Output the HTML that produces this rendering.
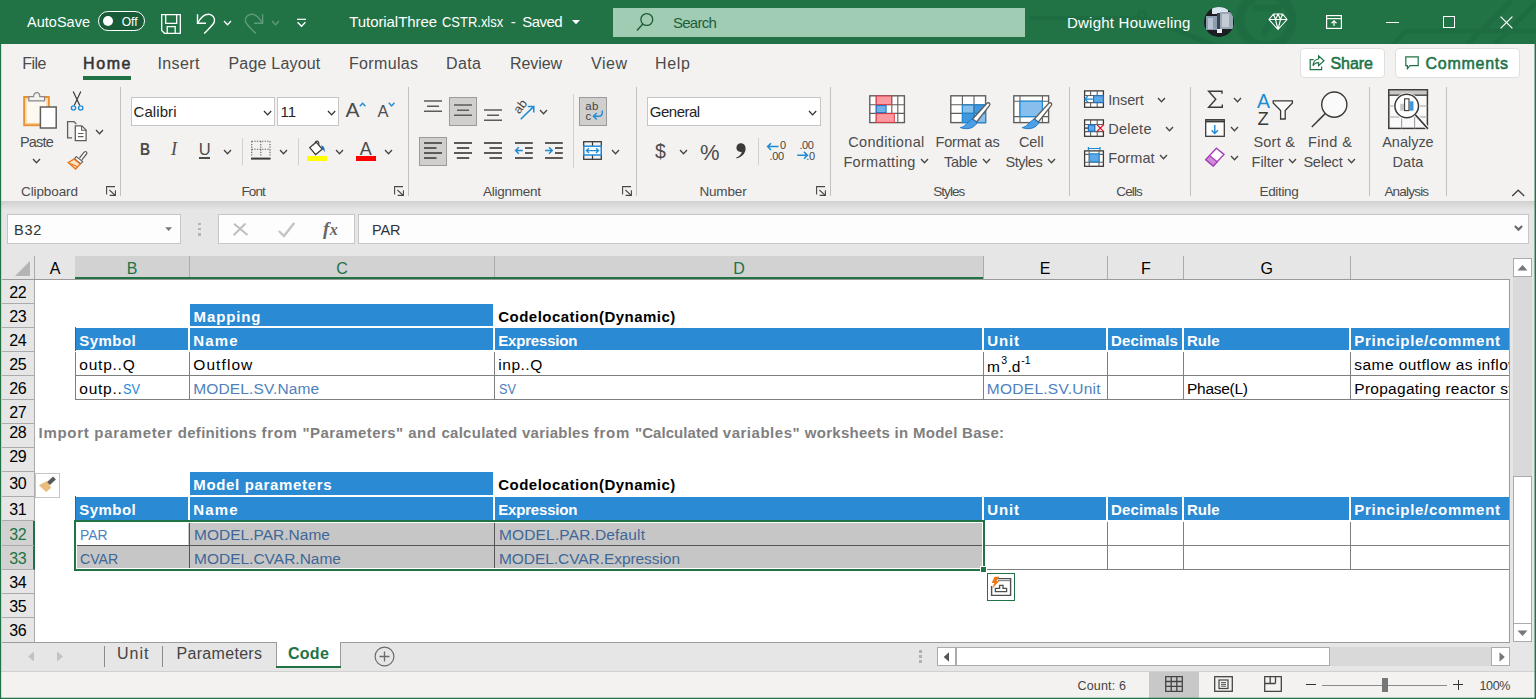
<!DOCTYPE html>
<html><head><meta charset="utf-8"><title>TutorialThree CSTR.xlsx - Excel</title>
<style>
html,body{margin:0;padding:0}
body{width:1536px;height:699px;overflow:hidden;position:relative;background:#e6e6e6;font-family:"Liberation Sans",sans-serif}
.a{position:absolute;box-sizing:border-box}
.t{position:absolute;white-space:pre;line-height:1}
svg{overflow:visible}
</style></head><body>
<div class="a" style="left:0px;top:0px;width:1536px;height:44px;background:#217346;"></div>
<svg class="a" style="left:1030px;top:0px;" width="506" height="44" viewBox="0 0 506 44"><g fill="none" stroke="#1e6c41" stroke-width="4.5"><circle cx="236" cy="20" r="26" stroke-width="9"/><path d="M222 8 H248 L233 36" stroke-width="6.5"/><path d="M0 18 H106"/><circle cx="112" cy="15" r="4" stroke-width="3"/><path d="M118 19 L196 50" stroke-width="5"/><path d="M362 46 L376 31 H506 M438 44 L482 0 M465 44 L506 3"/></g></svg>
<span class="t" style="left:27.00px;top:15px;font-size:14.5px;color:#fff;letter-spacing:0.017px;">AutoSave</span>
<div class="a" style="left:98px;top:11px;width:47px;height:20px;background:#185c37;border:1px solid #fff;border-radius:10px;"></div>
<div class="a" style="left:103px;top:16px;width:10px;height:10px;background:#fff;border-radius:5px;"></div>
<span class="t" style="left:121.70px;top:16px;font-size:12px;color:#fff;letter-spacing:0.057px;">Off</span>
<svg class="a" style="left:161px;top:14px;" width="20" height="20" viewBox="0 0 20 20"><path d="M0.7 0.7 H19.3 V19.3 H3.5 L0.7 16.5 Z M4.7 0.7 V9.3 H15.7 V0.7 M6.2 19.3 V12.7 H14.2 V19.3" fill="none" stroke="#fff" stroke-width="1.3"/></svg>
<svg class="a" style="left:195px;top:12px;" width="24" height="24" viewBox="0 0 24 24"><path d="M2.5 2.3 V11.2 H11" fill="none" stroke="#fff" stroke-width="1.4"/><path d="M3 10.7 C6 5 10 2.3 13.5 2.3 C17.5 2.3 20.5 6 19.3 10 C18.6 12.3 16 14.5 9.2 21.6" fill="none" stroke="#fff" stroke-width="1.4"/></svg>
<svg class="a" style="left:223.0px;top:19.6px;" width="9" height="5.8" viewBox="0 0 9 5.8"><path d="M1 1 L4.5 4.8 L8 1" fill="none" stroke="#fff" stroke-width="1.3"/></svg>
<svg class="a" style="left:243px;top:12px;" width="24" height="24" viewBox="0 0 24 24"><path d="M19.6 2.3 V11.2 H11" fill="none" stroke="#5f9b7b" stroke-width="1.4"/><path d="M19 10.7 C16 5 12 2.3 8.5 2.3 C4.5 2.3 1.5 6 2.7 10 C3.4 12.3 6 14.5 12.8 21.6" fill="none" stroke="#5f9b7b" stroke-width="1.4"/></svg>
<svg class="a" style="left:271.0px;top:19.6px;" width="9" height="5.8" viewBox="0 0 9 5.8"><path d="M1 1 L4.5 4.8 L8 1" fill="none" stroke="#5f9b7b" stroke-width="1.3"/></svg>
<svg class="a" style="left:296px;top:18px;" width="11" height="10" viewBox="0 0 11 10"><path d="M1 1.3 H10" stroke="#fff" stroke-width="1.2" fill="none"/><path d="M1.6 4.2 L5.5 8.2 L9.4 4.2" stroke="#fff" stroke-width="1.3" fill="none"/></svg>
<span class="t" style="left:349.30px;top:14px;font-size:15px;color:#fff;letter-spacing:-0.079px;">TutorialThree</span>
<span class="t" style="left:441.60px;top:14px;font-size:15px;color:#fff;transform:scaleX(0.8640);transform-origin:0 0;">CSTR.xlsx</span>
<span class="t" style="left:510.70px;top:14px;font-size:15px;color:#fff;">-</span>
<span class="t" style="left:522.30px;top:14px;font-size:15px;color:#fff;letter-spacing:-0.533px;">Saved</span>
<svg class="a" style="left:571.5px;top:20px;" width="8" height="5" viewBox="0 0 8 5"><path d="M0 0 L4 4.2 L8 0 Z" fill="#fff"/></svg>
<div class="a" style="left:613px;top:8px;width:412px;height:29px;background:#9fccb3;"></div>
<svg class="a" style="left:636px;top:12px;" width="20" height="20" viewBox="0 0 20 20"><circle cx="10.8" cy="7.5" r="5.9" fill="none" stroke="#1e5c3a" stroke-width="1.3"/><path d="M6.8 12 L1 18.5" stroke="#1e5c3a" stroke-width="1.4"/></svg>
<span class="t" style="left:673.00px;top:15px;font-size:15px;color:#1e5c3a;letter-spacing:-0.745px;">Search</span>
<span class="t" style="left:1067.00px;top:15px;font-size:15px;color:#fff;letter-spacing:0.223px;">Dwight Houweling</span>
<div class="a" style="left:1204px;top:7px;width:30px;height:30px;background:#1b1d20;border-radius:50%;overflow:hidden;"><div class="a" style="left:8px;top:0;width:16px;height:7px;background:#d9e6ef"></div><div class="a" style="left:2px;top:9px;width:11px;height:14px;background:#8c9db1"></div><div class="a" style="left:4px;top:11px;width:5px;height:11px;background:#b7c3d0"></div><div class="a" style="left:16px;top:5px;width:13px;height:17px;background:#9aa7b5"></div><div class="a" style="left:18px;top:7px;width:7px;height:13px;background:#c3ccd5"></div><div class="a" style="left:13px;top:6px;width:3px;height:20px;background:#3a4654"></div><div class="a" style="left:13px;top:22px;width:5px;height:4px;background:#e8edf2"></div></div>
<svg class="a" style="left:1268px;top:13px;" width="20" height="18" viewBox="0 0 20 18"><path d="M5.5 1 H14.5 L19 6.5 L10 16.5 L1 6.5 Z M1 6.5 H19 M5.5 1 L7.5 6.5 L10 16.5 L12.5 6.5 L14.5 1 M7.5 6.5 L10 1 L12.5 6.5" fill="none" stroke="#fff" stroke-width="1.1"/></svg>
<svg class="a" style="left:1326px;top:15px;" width="16" height="14" viewBox="0 0 16 14"><rect x="0.6" y="0.6" width="14.8" height="12.8" fill="none" stroke="#fff" stroke-width="1.2"/><path d="M0.6 3.6 H15.4" stroke="#fff" stroke-width="1.2"/><path d="M8 11 V6 M5.5 8.2 L8 5.8 L10.5 8.2" stroke="#fff" stroke-width="1.2" fill="none"/></svg>
<div class="a" style="left:1385.5px;top:21.5px;width:13.5px;height:1.3px;background:#fff;"></div>
<div class="a" style="left:1443px;top:16px;width:12px;height:12px;border:1.3px solid #fff;"></div>
<svg class="a" style="left:1499.5px;top:15.8px;" width="13" height="13" viewBox="0 0 13 13"><path d="M0.6 0.6 L12.4 12.4 M12.4 0.6 L0.6 12.4" stroke="#fff" stroke-width="1.3"/></svg>
<div class="a" style="left:0px;top:44px;width:1536px;height:157px;background:#f3f2f1;"></div>
<span class="t" style="left:22.20px;top:56px;font-size:16px;color:#4a4a4a;letter-spacing:-0.494px;">File</span>
<span class="t" style="left:83.00px;top:56px;font-size:16px;color:#333;letter-spacing:1.607px;-webkit-text-stroke:0.55px #333;">Home</span>
<div class="a" style="left:83px;top:76px;width:48px;height:3.5px;background:#217346;"></div>
<span class="t" style="left:157.40px;top:56px;font-size:16px;color:#4a4a4a;letter-spacing:0.417px;">Insert</span>
<span class="t" style="left:228.50px;top:56px;font-size:16px;color:#4a4a4a;letter-spacing:0.195px;">Page Layout</span>
<span class="t" style="left:349.00px;top:56px;font-size:16px;color:#4a4a4a;letter-spacing:0.331px;">Formulas</span>
<span class="t" style="left:446.00px;top:56px;font-size:16px;color:#4a4a4a;letter-spacing:0.401px;">Data</span>
<span class="t" style="left:510.00px;top:56px;font-size:16px;color:#4a4a4a;letter-spacing:-0.092px;">Review</span>
<span class="t" style="left:591.00px;top:56px;font-size:16px;color:#4a4a4a;letter-spacing:0.536px;">View</span>
<span class="t" style="left:655.00px;top:56px;font-size:16px;color:#4a4a4a;letter-spacing:0.698px;">Help</span>
<div class="a" style="left:1300px;top:48px;width:85px;height:30px;background:#fff;border:1px solid #e1dfdd;border-radius:4px;"></div>
<div class="a" style="left:1395px;top:48px;width:125px;height:30px;background:#fff;border:1px solid #e1dfdd;border-radius:4px;"></div>
<svg class="a" style="left:1309px;top:55px;" width="16" height="16" viewBox="0 0 16 16"><path d="M9.6 4 V0.9 L15 5.8 L9.6 10.7 V7.6 C6.8 7.6 5.2 8.6 4 10.8 C4.2 6.8 6.2 4.4 9.6 4 Z" fill="none" stroke="#217346" stroke-width="1.2"/><path d="M4.6 4.6 H1.2 V14.6 H12.6 V11.6" fill="none" stroke="#217346" stroke-width="1.2"/></svg>
<span class="t" style="left:1330.50px;top:56px;font-size:16px;color:#217346;letter-spacing:-0.049px;-webkit-text-stroke:0.55px #217346;">Share</span>
<svg class="a" style="left:1405px;top:55.5px;" width="15" height="14" viewBox="0 0 15 14"><path d="M0.8 0.8 H13.2 V9.6 H5 L2.4 12.6 V9.6 H0.8 Z" fill="none" stroke="#217346" stroke-width="1.2"/></svg>
<span class="t" style="left:1425.50px;top:56px;font-size:16px;color:#217346;letter-spacing:0.735px;-webkit-text-stroke:0.55px #217346;">Comments</span>
<div class="a" style="left:120px;top:87px;width:1px;height:109px;background:#c3c1be;"></div>
<div class="a" style="left:408px;top:87px;width:1px;height:109px;background:#c3c1be;"></div>
<div class="a" style="left:636px;top:87px;width:1px;height:109px;background:#c3c1be;"></div>
<div class="a" style="left:830px;top:87px;width:1px;height:109px;background:#c3c1be;"></div>
<div class="a" style="left:1069px;top:87px;width:1px;height:109px;background:#c3c1be;"></div>
<div class="a" style="left:1190px;top:87px;width:1px;height:109px;background:#c3c1be;"></div>
<div class="a" style="left:1369px;top:87px;width:1px;height:109px;background:#c3c1be;"></div>
<div class="a" style="left:1446px;top:87px;width:1px;height:109px;background:#c3c1be;"></div>
<div class="a" style="left:0px;top:201px;width:1536px;height:9px;background:linear-gradient(#cfcfcf,#d6d6d6 25%,#e6e6e6);"></div>
<span class="t" style="left:21.00px;top:185px;font-size:13.5px;color:#4c4c4c;letter-spacing:-0.098px;">Clipboard</span>
<svg class="a" style="left:105.8px;top:186px;" width="10" height="10" viewBox="0 0 10 10"><path d="M0.6 8.6 V0.6 H9 M3.4 4 L9.3 9.3 M9.4 4.3 V9.4 H3.6" fill="none" stroke="#4a4846" stroke-width="1.1"/></svg>
<span class="t" style="left:241.50px;top:185px;font-size:13.5px;color:#4c4c4c;letter-spacing:-0.904px;">Font</span>
<svg class="a" style="left:393.9px;top:186px;" width="10" height="10" viewBox="0 0 10 10"><path d="M0.6 8.6 V0.6 H9 M3.4 4 L9.3 9.3 M9.4 4.3 V9.4 H3.6" fill="none" stroke="#4a4846" stroke-width="1.1"/></svg>
<span class="t" style="left:483.00px;top:185px;font-size:13.5px;color:#4c4c4c;letter-spacing:-0.254px;">Alignment</span>
<svg class="a" style="left:621.9px;top:186px;" width="10" height="10" viewBox="0 0 10 10"><path d="M0.6 8.6 V0.6 H9 M3.4 4 L9.3 9.3 M9.4 4.3 V9.4 H3.6" fill="none" stroke="#4a4846" stroke-width="1.1"/></svg>
<span class="t" style="left:699.40px;top:185px;font-size:13.5px;color:#4c4c4c;letter-spacing:-0.143px;">Number</span>
<svg class="a" style="left:815.9px;top:186px;" width="10" height="10" viewBox="0 0 10 10"><path d="M0.6 8.6 V0.6 H9 M3.4 4 L9.3 9.3 M9.4 4.3 V9.4 H3.6" fill="none" stroke="#4a4846" stroke-width="1.1"/></svg>
<span class="t" style="left:933.20px;top:185px;font-size:13.5px;color:#4c4c4c;letter-spacing:-0.933px;">Styles</span>
<span class="t" style="left:1116.30px;top:185px;font-size:13.5px;color:#4c4c4c;letter-spacing:-0.877px;">Cells</span>
<span class="t" style="left:1259.50px;top:185px;font-size:13.5px;color:#4c4c4c;letter-spacing:-0.346px;">Editing</span>
<span class="t" style="left:1384.40px;top:185px;font-size:13.5px;color:#4c4c4c;letter-spacing:-0.796px;">Analysis</span>
<svg class="a" style="left:1511px;top:189px;" width="15" height="8" viewBox="0 0 15 8"><path d="M1.2 7 L7.2 1.2 L13.2 7" fill="none" stroke="#444" stroke-width="1.4"/></svg>
<svg class="a" style="left:22px;top:91px;" width="36" height="40" viewBox="0 0 36 40"><rect x="2.2" y="6" width="24.6" height="28.2" fill="#fdf8f0" stroke="#e8912d" stroke-width="2"/><rect x="4" y="7.8" width="21" height="24.6" fill="none" stroke="#f7c98e" stroke-width="1"/><path d="M6.8 9.8 V5.6 H11.6 C11.6 0.2 17.8 0.2 17.8 5.6 H22.6 V9.8 Z" fill="#f3f2f1" stroke="#8a8886" stroke-width="1.2"/><rect x="18.4" y="16" width="15.8" height="21" fill="#fff" stroke="#605e5c" stroke-width="1.5"/></svg>
<span class="t" style="left:20.00px;top:135px;font-size:14.5px;color:#4c4c4c;letter-spacing:-0.820px;">Paste</span>
<svg class="a" style="left:32.0px;top:157.5px;" width="9" height="5.8" viewBox="0 0 9 5.8"><path d="M1 1 L4.5 4.8 L8 1" fill="none" stroke="#444" stroke-width="1.3"/></svg>
<svg class="a" style="left:68px;top:90px;" width="18" height="23" viewBox="0 0 18 23"><path d="M5.2 1.5 L11.8 15.5 M12.8 1.5 L6.2 15.5" stroke="#3b3a39" stroke-width="1.2" fill="none"/><circle cx="5.5" cy="18" r="2.1" fill="none" stroke="#1e8bd5" stroke-width="1.4"/><circle cx="12.7" cy="18" r="2.1" fill="none" stroke="#1e8bd5" stroke-width="1.4"/></svg>
<svg class="a" style="left:66px;top:120px;" width="22" height="22" viewBox="0 0 22 22"><path d="M6 17.8 H1.6 V1.6 H8 L10.3 4" fill="none" stroke="#605e5c" stroke-width="1.3"/><path d="M9.3 5.8 H15.8 L20.1 10 V20.6 H9.3 Z" fill="#fff" stroke="#605e5c" stroke-width="1.3"/><path d="M15.6 6 V10.2 H20 M12 13.5 H17.5 M12 16.6 H17.5" fill="none" stroke="#605e5c" stroke-width="1.1"/></svg>
<svg class="a" style="left:94.9px;top:128.7px;" width="9" height="5.8" viewBox="0 0 9 5.8"><path d="M1 1 L4.5 4.8 L8 1" fill="none" stroke="#444" stroke-width="1.3"/></svg>
<svg class="a" style="left:67px;top:150px;" width="22" height="22" viewBox="0 0 22 22"><path d="M12.5 8 L17.2 2.2 C18.6 0.6 20.8 2.4 19.5 4 L14.8 9.8" fill="#fff" stroke="#605e5c" stroke-width="1.2"/><path d="M9.3 6.6 L15.6 11.6 L13.6 13.8 L7.4 8.8 Z" fill="#fff" stroke="#605e5c" stroke-width="1.2"/><path d="M7 9 L1.2 12.6 L8.6 19 L13.2 14 Z" fill="#fbe3c6" stroke="#e8761c" stroke-width="1.3"/><path d="M3.5 13.5 L10.3 16.8" stroke="#e8761c" stroke-width="1.2"/></svg>
<div class="a" style="left:131px;top:97px;width:144px;height:29px;background:#fff;border:1px solid #c8c6c4;"></div>
<div class="a" style="left:277px;top:97px;width:62px;height:29px;background:#fff;border:1px solid #c8c6c4;"></div>
<span class="t" style="left:133.50px;top:104px;font-size:15px;color:#252423;letter-spacing:0.082px;">Calibri</span>
<svg class="a" style="left:262.79999999999995px;top:109.64999999999999px;" width="9.2" height="5.9" viewBox="0 0 9.2 5.9"><path d="M1 1 L4.6 4.9 L8.2 1" fill="none" stroke="#333" stroke-width="1.3"/></svg>
<span class="t" style="left:280.50px;top:104px;font-size:15px;color:#252423;">11</span>
<svg class="a" style="left:326.79999999999995px;top:109.64999999999999px;" width="9.2" height="5.9" viewBox="0 0 9.2 5.9"><path d="M1 1 L4.6 4.9 L8.2 1" fill="none" stroke="#333" stroke-width="1.3"/></svg>
<span class="t" style="left:345.50px;top:99px;font-size:21px;color:#4c4c4c;">A</span>
<svg class="a" style="left:358.7px;top:101.5px;" width="8" height="5" viewBox="0 0 8 5"><path d="M0.8 4.3 L3.6 1.2 L6.4 4.3" fill="none" stroke="#1e8bd5" stroke-width="1.4"/></svg>
<span class="t" style="left:377.50px;top:103px;font-size:16.5px;color:#4c4c4c;">A</span>
<svg class="a" style="left:388.3px;top:101.7px;" width="8" height="5" viewBox="0 0 8 5"><path d="M0.8 0.8 L3.6 3.9 L6.4 0.8" fill="none" stroke="#1e8bd5" stroke-width="1.4"/></svg>
<span class="t" style="left:140.00px;top:141px;font-size:16.5px;color:#4c4c4c;font-weight:700;transform:scaleX(0.85);transform-origin:0 0;">B</span>
<span class="t" style="left:171.00px;top:140px;font-size:18px;color:#4c4c4c;font-style:italic;font-family:'Liberation Serif',serif;">I</span>
<span class="t" style="left:198.70px;top:141px;font-size:16.5px;color:#4c4c4c;">U</span>
<div class="a" style="left:198.8px;top:157.3px;width:11.2px;height:1.5px;background:#4c4c4c;"></div>
<svg class="a" style="left:223.0px;top:148.7px;" width="9" height="5.8" viewBox="0 0 9 5.8"><path d="M1 1 L4.5 4.8 L8 1" fill="none" stroke="#444" stroke-width="1.3"/></svg>
<div class="a" style="left:242px;top:138px;width:1px;height:27px;background:#d2d0ce;"></div>
<svg class="a" style="left:251px;top:140px;" width="20" height="20" viewBox="0 0 20 20"><path d="M0.7 1.3 H19 M0.7 1.3 V17 M19 1.3 V17 M9.8 1.3 V17 M0.7 9.3 H19" stroke="#605e5c" stroke-width="1.1" stroke-dasharray="1.3 1.3" fill="none"/><path d="M0 18.6 H19.6" stroke="#3b3a39" stroke-width="2"/></svg>
<svg class="a" style="left:279.0px;top:148.7px;" width="9" height="5.8" viewBox="0 0 9 5.8"><path d="M1 1 L4.5 4.8 L8 1" fill="none" stroke="#444" stroke-width="1.3"/></svg>
<div class="a" style="left:298px;top:138px;width:1px;height:27px;background:#d2d0ce;"></div>
<svg class="a" style="left:307px;top:140px;" width="21" height="22" viewBox="0 0 21 22"><path d="M8.2 3.5 C8.2 0.2 11.8 0.2 11.8 3.5 V6" fill="none" stroke="#3b3a39" stroke-width="1.1"/><path d="M9.2 2.2 L15.2 9.2 L8.6 14.6 L2.8 7.6 Z" fill="#fff" stroke="#3b3a39" stroke-width="1.3"/><path d="M14.3 5.2 C17.3 6.2 18.2 9 17.6 12.6 C16.6 10 15.8 9.2 14.6 8.6 Z" fill="#1e6fc0"/><rect x="0" y="16" width="20" height="5" fill="#ffff00"/></svg>
<svg class="a" style="left:335.0px;top:148.7px;" width="9" height="5.8" viewBox="0 0 9 5.8"><path d="M1 1 L4.5 4.8 L8 1" fill="none" stroke="#444" stroke-width="1.3"/></svg>
<span class="t" style="left:359.80px;top:140px;font-size:18px;color:#4c4c4c;">A</span>
<div class="a" style="left:356px;top:156px;width:20px;height:5px;background:#ff0000;"></div>
<svg class="a" style="left:384.0px;top:148.7px;" width="9" height="5.8" viewBox="0 0 9 5.8"><path d="M1 1 L4.5 4.8 L8 1" fill="none" stroke="#444" stroke-width="1.3"/></svg>
<div class="a" style="left:449px;top:97px;width:28px;height:29px;background:#d0cfce;border:1px solid #9d9b99;"></div>
<div class="a" style="left:579px;top:97px;width:28px;height:29px;background:#d0cfce;border:1px solid #9d9b99;"></div>
<div class="a" style="left:419px;top:137px;width:28px;height:29px;background:#d0cfce;border:1px solid #9d9b99;"></div>
<svg class="a" style="left:423.9px;top:99.3px;" width="18" height="16" viewBox="0 0 18 16"><path d="M0 2 H18 M3 7.2 H15 M0 12.3 H18" stroke="#5d5b58" stroke-width="1.4"/></svg>
<svg class="a" style="left:454.1px;top:103.1px;" width="18" height="16" viewBox="0 0 18 16"><path d="M0 2 H18 M3 7.2 H15 M0 12.3 H18" stroke="#5d5b58" stroke-width="1.4"/></svg>
<svg class="a" style="left:484px;top:108.1px;" width="18" height="16" viewBox="0 0 18 16"><path d="M0 2 H18 M3 7.2 H15 M0 12.3 H18" stroke="#5d5b58" stroke-width="1.4"/></svg>
<svg class="a" style="left:511px;top:97px;" width="26" height="26" viewBox="0 0 26 26"><text x="0" y="0" font-size="12.5" font-family="Liberation Sans" fill="#444" transform="translate(8.3 17.6) rotate(-52)">ab</text><path d="M9.7 22.3 L22.6 9.6 M16.8 9.4 H22.8 V15.4" fill="none" stroke="#1e8bd5" stroke-width="1.5"/></svg>
<svg class="a" style="left:538.8px;top:108.69999999999999px;" width="9" height="5.8" viewBox="0 0 9 5.8"><path d="M1 1 L4.5 4.8 L8 1" fill="none" stroke="#444" stroke-width="1.3"/></svg>
<svg class="a" style="left:584px;top:100px;" width="22" height="22" viewBox="0 0 22 22"><text x="1.2" y="9.8" font-size="11.5" font-family="Liberation Sans" fill="#444" letter-spacing="0.3">ab</text><text x="1.4" y="19.5" font-size="11.5" font-family="Liberation Sans" fill="#444">c</text><path d="M18.3 10.5 V12.5 C18.3 15.3 16.8 16.3 14.3 16.3 H9.6 M12.8 13 L9.4 16.3 L12.8 19.6" fill="none" stroke="#1e8bd5" stroke-width="1.4"/></svg>
<svg class="a" style="left:423.9px;top:141px;" width="18" height="20" viewBox="0 0 18 20"><path d="M0.0 2.0 H18.0 M0.0 7.0 H12.5 M0.0 12.0 H18.0 M0.0 17.0 H12.5 " stroke="#5d5b58" stroke-width="1.8"/></svg>
<svg class="a" style="left:454.1px;top:141px;" width="18" height="20" viewBox="0 0 18 20"><path d="M0.0 2.0 H18.0 M2.8 7.0 H15.2 M0.0 12.0 H18.0 M2.8 17.0 H15.2 " stroke="#5d5b58" stroke-width="1.8"/></svg>
<svg class="a" style="left:484px;top:141px;" width="18" height="20" viewBox="0 0 18 20"><path d="M0.0 2.0 H18.0 M5.5 7.0 H18.0 M0.0 12.0 H18.0 M5.5 17.0 H18.0 " stroke="#5d5b58" stroke-width="1.8"/></svg>
<svg class="a" style="left:515.2px;top:141px;" width="18" height="20" viewBox="0 0 18 20"><path d="M0 2 H17.8 M10 7 H17.8 M10 12 H17.8 M0 17 H17.8" stroke="#5d5b58" stroke-width="1.8"/><path d="M7.8 9.5 H0.8 M3.8 6.3 L0.6 9.5 L3.8 12.7" fill="none" stroke="#1e8bd5" stroke-width="1.5"/></svg>
<svg class="a" style="left:545.1px;top:141px;" width="18" height="20" viewBox="0 0 18 20"><path d="M0 2 H17.8 M10 7 H17.8 M10 12 H17.8 M0 17 H17.8" stroke="#5d5b58" stroke-width="1.8"/><path d="M0 9.5 H7 M4 6.3 L7.2 9.5 L4 12.7" fill="none" stroke="#1e8bd5" stroke-width="1.5"/></svg>
<div class="a" style="left:573px;top:94px;width:1px;height:74px;background:#d2d0ce;"></div>
<svg class="a" style="left:583px;top:141px;" width="19" height="19" viewBox="0 0 19 19"><rect x="0.7" y="0.7" width="17.6" height="17.6" fill="#f3f2f1" stroke="#3b3a39" stroke-width="1.3"/><path d="M9.5 0.7 V5 M9.5 14 V18.3" stroke="#3b3a39" stroke-width="1.2" fill="none"/><rect x="0.8" y="5.2" width="17.4" height="8.8" fill="#fff" stroke="#1e8bd5" stroke-width="1.5"/><path d="M3.6 9.6 H15.4 M6 7.2 L3.4 9.6 L6 12 M13 7.2 L15.6 9.6 L13 12" fill="none" stroke="#1e8bd5" stroke-width="1.3"/></svg>
<svg class="a" style="left:610.8px;top:148.5px;" width="9" height="5.8" viewBox="0 0 9 5.8"><path d="M1 1 L4.5 4.8 L8 1" fill="none" stroke="#444" stroke-width="1.3"/></svg>
<div class="a" style="left:647px;top:97px;width:174px;height:29px;background:#fff;border:1px solid #c8c6c4;"></div>
<span class="t" style="left:649.80px;top:104px;font-size:15px;color:#252423;letter-spacing:-0.494px;">General</span>
<svg class="a" style="left:808.4px;top:109.64999999999999px;" width="9.2" height="5.9" viewBox="0 0 9.2 5.9"><path d="M1 1 L4.6 4.9 L8.2 1" fill="none" stroke="#333" stroke-width="1.3"/></svg>
<span class="t" style="left:655.00px;top:142px;font-size:19.5px;color:#4c4c4c;">$</span>
<svg class="a" style="left:678.8px;top:148.7px;" width="9" height="5.8" viewBox="0 0 9 5.8"><path d="M1 1 L4.5 4.8 L8 1" fill="none" stroke="#444" stroke-width="1.3"/></svg>
<span class="t" style="left:700.00px;top:142px;font-size:22px;color:#4c4c4c;">%</span>
<svg class="a" style="left:735px;top:142px;" width="12" height="18" viewBox="0 0 12 18"><path d="M5.8 1.2 C8.8 1.2 10.6 3.4 10.6 6.6 C10.6 11.2 7.2 15 1.6 16.6 L1.2 15.6 C4.6 14.2 6.4 12.2 6.8 9.8 C3.8 10.6 1.4 8.6 1.4 5.8 C1.4 3.2 3.4 1.2 5.8 1.2 Z" fill="#3b3a39"/></svg>
<div class="a" style="left:758px;top:138px;width:1px;height:27px;background:#d2d0ce;"></div>
<svg class="a" style="left:767px;top:140px;" width="21" height="21" viewBox="0 0 21 21"><path d="M11.5 6.6 H0.6 M4 3.2 L0.6 6.6 L4 10" fill="none" stroke="#1e8bd5" stroke-width="1.5"/><text x="13" y="9.2" font-size="11" font-family="Liberation Sans" fill="#444">0</text><text x="2.6" y="19.5" font-size="11" font-family="Liberation Sans" fill="#444" letter-spacing="-0.4">.00</text></svg>
<svg class="a" style="left:796px;top:140px;" width="21" height="21" viewBox="0 0 21 21"><text x="3.4" y="9.2" font-size="11" font-family="Liberation Sans" fill="#444" letter-spacing="-0.4">.00</text><path d="M1.2 15.3 H11.3 M8 11.9 L11.4 15.3 L8 18.7" fill="none" stroke="#1e8bd5" stroke-width="1.5"/><text x="10.3" y="19.5" font-size="11" font-family="Liberation Sans" fill="#444" letter-spacing="-0.4">.0</text></svg>
<svg class="a" style="left:869px;top:95px;" width="36" height="29" viewBox="0 0 36 29"><rect x="0.8" y="0.8" width="34.6" height="26.8" fill="#fff" stroke="#605e5c" stroke-width="1.4"/><path d="M7.2 0.8 V27.6 M22.8 0.8 V27.6 M28.8 0.8 V27.6 M0.8 9.7 H35.4 M0.8 18.4 H35.4" stroke="#605e5c" stroke-width="1.1" fill="none"/><rect x="7.3" y="1" width="15.3" height="8.6" fill="#fb9aa0" stroke="#e03a45" stroke-width="1"/><rect x="7.3" y="18.6" width="18" height="8.8" fill="#fb9aa0" stroke="#e03a45" stroke-width="1"/><rect x="7.3" y="10.6" width="9.8" height="7" fill="#6fb1e8" stroke="#1e6fc0" stroke-width="1"/></svg>
<span class="t" style="left:848.20px;top:135px;font-size:14.5px;color:#4c4c4c;letter-spacing:0.355px;">Conditional</span>
<span class="t" style="left:843.40px;top:155px;font-size:14.5px;color:#4c4c4c;letter-spacing:0.300px;">Formatting</span>
<svg class="a" style="left:920.0px;top:157.5px;" width="9" height="5.8" viewBox="0 0 9 5.8"><path d="M1 1 L4.5 4.8 L8 1" fill="none" stroke="#444" stroke-width="1.3"/></svg>
<svg class="a" style="left:950px;top:95px;" width="42" height="36" viewBox="0 0 42 36"><rect x="0.8" y="0.8" width="34.8" height="26.8" fill="#fff" stroke="#605e5c" stroke-width="1.4"/><rect x="12.4" y="9.7" width="23.2" height="17.9" fill="#3f97e0"/><rect x="13" y="10.3" width="10.6" height="8" fill="#86bfee"/><rect x="24.6" y="19" width="10.6" height="8.2" fill="#86bfee"/><path d="M12.4 0.8 V27.6 M24 0.8 V27.6 M0.8 9.7 H35.6 M0.8 18.4 H35.6" stroke="#605e5c" stroke-width="1.1" fill="none"/><path d="M12.4 9.7 V27.6 M24 9.7 V27.6 M12.4 9.7 H35.6 M12.4 18.4 H35.6 M35.6 9.7 V27.6 M12.4 27.6 H35.6" stroke="#1e8bd5" stroke-width="1.1" fill="none"/><path d="M37 8.2 C39 7 40.8 8.8 39.4 10.6 L26.6 27 L22.6 24 Z" fill="#fff" stroke="#605e5c" stroke-width="1.3"/><path d="M22.2 24 L26.9 27.6 C25 33 17 35.2 10.3 32.6 C15 32 17.3 27.2 22.2 24 Z" fill="#4a9fe6" stroke="#1e6fc0" stroke-width="0.9"/></svg>
<span class="t" style="left:935.40px;top:135px;font-size:14.5px;color:#4c4c4c;letter-spacing:-0.108px;">Format as</span>
<span class="t" style="left:944.00px;top:155px;font-size:14.5px;color:#4c4c4c;letter-spacing:-0.291px;">Table</span>
<svg class="a" style="left:981.9px;top:157.5px;" width="9" height="5.8" viewBox="0 0 9 5.8"><path d="M1 1 L4.5 4.8 L8 1" fill="none" stroke="#444" stroke-width="1.3"/></svg>
<svg class="a" style="left:1013px;top:95px;" width="42" height="36" viewBox="0 0 42 36"><rect x="0.8" y="0.8" width="34.8" height="26.8" fill="#fff" stroke="#605e5c" stroke-width="1.4"/><path d="M7 0.8 V27.6 M29.4 0.8 V27.6 M0.8 6.2 H35.6 M0.8 21.6 H35.6" stroke="#605e5c" stroke-width="1.1" fill="none"/><rect x="7" y="6.2" width="22.4" height="15.4" fill="#86bfee" stroke="#1e8bd5" stroke-width="1.2"/><g transform="translate(-1.2 0)"><path d="M37 8.2 C39 7 40.8 8.8 39.4 10.6 L26.6 27 L22.6 24 Z" fill="#fff" stroke="#605e5c" stroke-width="1.3"/><path d="M22.2 24 L26.9 27.6 C25 33 17 35.2 10.3 32.6 C15 32 17.3 27.2 22.2 24 Z" fill="#4a9fe6" stroke="#1e6fc0" stroke-width="0.9"/></g></svg>
<span class="t" style="left:1019.00px;top:135px;font-size:14.5px;color:#4c4c4c;letter-spacing:-0.126px;">Cell</span>
<span class="t" style="left:1005.60px;top:155px;font-size:14.5px;color:#4c4c4c;letter-spacing:-0.477px;">Styles</span>
<svg class="a" style="left:1047.2px;top:157.5px;" width="9" height="5.8" viewBox="0 0 9 5.8"><path d="M1 1 L4.5 4.8 L8 1" fill="none" stroke="#444" stroke-width="1.3"/></svg>
<svg class="a" style="left:1084px;top:90px;" width="20" height="18" viewBox="0 0 20 18"><rect x="0.6" y="0.9" width="18.8" height="16.4" fill="#fff" stroke="#3b3a39" stroke-width="1.3"/><path d="M0.6 5.5 H19.4 M0.6 12.6 H19.4 M6.6 0.9 V17.3 M13.2 0.9 V17.3" fill="none" stroke="#605e5c" stroke-width="1.1"/><rect x="1.3" y="6.1" width="8" height="5.9" fill="#fff"/><rect x="9.6" y="5.7" width="9.8" height="6.8" fill="#5fa8e6" stroke="#1e6fc0" stroke-width="1.1"/><path d="M10 9.1 H1 M4 6 L0.9 9.1 L4 12.2" fill="none" stroke="#1e8bd5" stroke-width="1.4"/></svg>
<span class="t" style="left:1108.20px;top:93px;font-size:14.5px;color:#4c4c4c;letter-spacing:-0.133px;">Insert</span>
<svg class="a" style="left:1156.8px;top:96.6px;" width="9" height="5.8" viewBox="0 0 9 5.8"><path d="M1 1 L4.5 4.8 L8 1" fill="none" stroke="#444" stroke-width="1.3"/></svg>
<svg class="a" style="left:1084px;top:119px;" width="20" height="18" viewBox="0 0 20 18"><rect x="0.6" y="0.9" width="18.8" height="16.4" fill="#fff" stroke="#3b3a39" stroke-width="1.3"/><path d="M0.6 5.5 H19.4 M0.6 12.6 H19.4 M6.6 0.9 V17.3 M13.2 0.9 V17.3" fill="none" stroke="#605e5c" stroke-width="1.1"/><rect x="1.4" y="6.2" width="19" height="5.7" fill="#f3f2f1"/><path d="M0 9.1 H4.4" stroke="#3b3a39" stroke-width="1.3"/><rect x="4.4" y="6" width="6.4" height="6.2" fill="#5fa8e6" stroke="#1e6fc0" stroke-width="1.2"/><path d="M13.2 5.9 L19.4 12.4 M19.4 5.9 L13.2 12.4" fill="none" stroke="#e81123" stroke-width="1.3"/></svg>
<span class="t" style="left:1108.20px;top:122px;font-size:14.5px;color:#4c4c4c;letter-spacing:0.277px;">Delete</span>
<svg class="a" style="left:1164.7px;top:125.69999999999999px;" width="9" height="5.8" viewBox="0 0 9 5.8"><path d="M1 1 L4.5 4.8 L8 1" fill="none" stroke="#444" stroke-width="1.3"/></svg>
<svg class="a" style="left:1084px;top:147px;" width="20" height="20" viewBox="0 0 20 20"><rect x="0.6" y="3.9" width="18.8" height="15.4" fill="#fff" stroke="#3b3a39" stroke-width="1.3"/><path d="M0.6 7.4 H19.4 M0.6 15.2 H19.4 M5.2 3.9 V19.3 M15 3.9 V19.3" fill="none" stroke="#605e5c" stroke-width="1.1"/><rect x="5.4" y="6.9" width="9.6" height="7.8" fill="#5fa8e6" stroke="#1e8bd5" stroke-width="1.2"/><path d="M4.2 1.5 H16.2 M4.4 0 V3 M16 0 V3" stroke="#1e8bd5" stroke-width="1.2" fill="none"/></svg>
<span class="t" style="left:1108.20px;top:151px;font-size:14.5px;color:#4c4c4c;letter-spacing:0.096px;">Format</span>
<svg class="a" style="left:1159.1px;top:154.29999999999998px;" width="9" height="5.8" viewBox="0 0 9 5.8"><path d="M1 1 L4.5 4.8 L8 1" fill="none" stroke="#444" stroke-width="1.3"/></svg>
<svg class="a" style="left:1207px;top:90px;" width="17" height="19" viewBox="0 0 17 19"><path d="M15 3.8 V1.2 H1.6 L8.8 9.2 L1.6 17.2 H15.3 V14.6" fill="none" stroke="#3b3a39" stroke-width="1.4"/></svg>
<svg class="a" style="left:1232.5px;top:96.6px;" width="9" height="5.8" viewBox="0 0 9 5.8"><path d="M1 1 L4.5 4.8 L8 1" fill="none" stroke="#444" stroke-width="1.3"/></svg>
<svg class="a" style="left:1205px;top:119px;" width="20" height="18" viewBox="0 0 20 18"><rect x="0.7" y="0.7" width="18.6" height="16.6" fill="#fff" stroke="#3b3a39" stroke-width="1.3"/><path d="M0.7 2.4 H19.3" stroke="#3b3a39" stroke-width="2"/><path d="M9.8 6 V14.4 M6.6 11.2 L9.8 14.6 L13 11.2" fill="none" stroke="#1e8bd5" stroke-width="1.4"/></svg>
<svg class="a" style="left:1229.8px;top:125.69999999999999px;" width="9" height="5.8" viewBox="0 0 9 5.8"><path d="M1 1 L4.5 4.8 L8 1" fill="none" stroke="#444" stroke-width="1.3"/></svg>
<svg class="a" style="left:1204px;top:147px;" width="22" height="20" viewBox="0 0 22 20"><path d="M12.4 1.2 L20 7.4 L9.2 19 L1.8 12.6 Z" fill="#fff" stroke="#a33cb8" stroke-width="1.4"/><path d="M5.8 8.6 L13.2 14.8 L9.2 19 L1.8 12.6 Z" fill="#cf8ad8" stroke="#a33cb8" stroke-width="1.2"/></svg>
<svg class="a" style="left:1229.8px;top:154.6px;" width="9" height="5.8" viewBox="0 0 9 5.8"><path d="M1 1 L4.5 4.8 L8 1" fill="none" stroke="#444" stroke-width="1.3"/></svg>
<span class="t" style="left:1257.00px;top:92px;font-size:19.5px;color:#1e8bd5;">A</span>
<span class="t" style="left:1257.60px;top:110px;font-size:18.5px;color:#3b3a39;">Z</span>
<svg class="a" style="left:1272px;top:100px;" width="22" height="21" viewBox="0 0 22 21"><path d="M1.2 0.9 H20.4 V3 L13.2 10.6 V19 H8.6 V10.6 L1.2 3 Z" fill="#fafafa" stroke="#3b3a39" stroke-width="1.3"/></svg>
<span class="t" style="left:1253.40px;top:135px;font-size:14.5px;color:#4c4c4c;letter-spacing:0.241px;">Sort &</span>
<span class="t" style="left:1251.60px;top:155px;font-size:14.5px;color:#4c4c4c;letter-spacing:-0.024px;">Filter</span>
<svg class="a" style="left:1287.8px;top:157.5px;" width="9" height="5.8" viewBox="0 0 9 5.8"><path d="M1 1 L4.5 4.8 L8 1" fill="none" stroke="#444" stroke-width="1.3"/></svg>
<svg class="a" style="left:1310px;top:90px;" width="40" height="40" viewBox="0 0 40 40"><circle cx="24.3" cy="14.6" r="12.6" fill="#fafafa" stroke="#3b3a39" stroke-width="1.4"/><path d="M15.2 23.6 L1.8 37" stroke="#3b3a39" stroke-width="1.5"/></svg>
<span class="t" style="left:1308.00px;top:135px;font-size:14.5px;color:#4c4c4c;letter-spacing:0.379px;">Find &</span>
<span class="t" style="left:1303.40px;top:155px;font-size:14.5px;color:#4c4c4c;letter-spacing:-0.200px;">Select</span>
<svg class="a" style="left:1346.8px;top:157.5px;" width="9" height="5.8" viewBox="0 0 9 5.8"><path d="M1 1 L4.5 4.8 L8 1" fill="none" stroke="#444" stroke-width="1.3"/></svg>
<svg class="a" style="left:1388px;top:89px;" width="41" height="41" viewBox="0 0 41 41"><rect x="0.8" y="0.8" width="38.6" height="38.6" fill="#fafafa" stroke="#3b3a39" stroke-width="1.5"/><rect x="0.8" y="0.8" width="38.6" height="5.4" fill="#c8c6c4" stroke="#3b3a39" stroke-width="1.3"/><path d="M0.8 17 H39.4 M0.8 28 H39.4 M13.6 6.2 V39.4 M26.6 6.2 V39.4" stroke="#a19f9d" stroke-width="1.1"/><circle cx="18.7" cy="17" r="13.3" fill="#fff"/><circle cx="18.7" cy="17" r="11.8" fill="#fff" stroke="#3b3a39" stroke-width="1.5"/><rect x="12.2" y="14.7" width="4.3" height="7" fill="#c8c6c4"/><rect x="16.6" y="9.8" width="4.4" height="11.8" fill="#fff" stroke="#3b3a39" stroke-width="1.1"/><rect x="21.3" y="12.3" width="4.2" height="9.4" fill="#3f97e0"/><path d="M27.4 25.8 L39.6 39.2" stroke="#fff" stroke-width="3.6"/><path d="M27.2 25.6 L39.8 39.6" stroke="#3b3a39" stroke-width="1.6"/></svg>
<span class="t" style="left:1382.20px;top:135px;font-size:14.5px;color:#4c4c4c;letter-spacing:-0.014px;">Analyze</span>
<span class="t" style="left:1392.60px;top:155px;font-size:14.5px;color:#4c4c4c;letter-spacing:0.057px;">Data</span>
<div class="a" style="left:7px;top:214px;width:174px;height:30px;background:#fdfdfd;border:1px solid #c6c6c6;"></div>
<span class="t" style="left:14.00px;top:223px;font-size:14.5px;color:#333;letter-spacing:0.800px;">B32</span>
<svg class="a" style="left:165px;top:227px;" width="8" height="5" viewBox="0 0 8 5"><path d="M0.2 0.3 L3.6 4 L7 0.3 Z" fill="#777"/></svg>
<div class="a" style="left:198px;top:222.5px;width:3px;height:2.8px;background:#b4b4b4;"></div>
<div class="a" style="left:198px;top:227.7px;width:3px;height:2.8px;background:#b4b4b4;"></div>
<div class="a" style="left:198px;top:232.8px;width:3px;height:2.8px;background:#b4b4b4;"></div>
<div class="a" style="left:218px;top:214px;width:137px;height:30px;background:#fdfdfd;border:1px solid #c6c6c6;"></div>
<svg class="a" style="left:232px;top:222px;" width="18" height="15" viewBox="0 0 18 15"><path d="M2 1.8 L15.5 13 M13.5 1.5 L1.6 13.2" stroke="#bdbdbd" stroke-width="1.9" fill="none"/></svg>
<svg class="a" style="left:277px;top:221px;" width="20" height="17" viewBox="0 0 20 17"><path d="M1.8 10 L7 15 L17.2 2" fill="none" stroke="#c4c4c4" stroke-width="2.4"/></svg>
<span class="t" style="left:323.00px;top:219px;font-size:19px;color:#666;font-weight:700;font-style:italic;font-family:'Liberation Serif',serif;">f</span>
<span class="t" style="left:329.70px;top:222px;font-size:16px;color:#666;font-weight:700;font-style:italic;font-family:'Liberation Serif',serif;">x</span>
<div class="a" style="left:358px;top:214px;width:1171px;height:30px;background:#fdfdfd;border:1px solid #c6c6c6;"></div>
<span class="t" style="left:372.00px;top:223px;font-size:14.5px;color:#333;letter-spacing:-0.169px;">PAR</span>
<svg class="a" style="left:1514px;top:225.3px;" width="9" height="6" viewBox="0 0 9 6"><path d="M0.9 1 L4.5 4.6 L8.1 1" fill="none" stroke="#6a6a6a" stroke-width="2.2"/></svg>
<div class="a" style="left:35px;top:280px;width:1474px;height:362px;background:#fff;"></div>
<div class="a" style="left:2px;top:279px;width:1508px;height:1px;background:#9b9b9b;"></div>
<div class="a" style="left:1509px;top:279px;width:1px;height:364px;background:#9b9b9b;"></div>
<div class="a" style="left:2px;top:642px;width:1508px;height:1px;background:#9b9b9b;"></div>
<div class="a" style="left:75px;top:256px;width:908px;height:22px;background:#d2d2d2;"></div>
<div class="a" style="left:34px;top:256px;width:1px;height:23px;background:#ababab;"></div>
<div class="a" style="left:189px;top:256px;width:1px;height:23px;background:#ababab;"></div>
<div class="a" style="left:494px;top:256px;width:1px;height:23px;background:#ababab;"></div>
<div class="a" style="left:983px;top:256px;width:1px;height:23px;background:#ababab;"></div>
<div class="a" style="left:1107px;top:256px;width:1px;height:23px;background:#ababab;"></div>
<div class="a" style="left:1183px;top:256px;width:1px;height:23px;background:#ababab;"></div>
<div class="a" style="left:1350px;top:256px;width:1px;height:23px;background:#ababab;"></div>
<div class="a" style="left:75px;top:277px;width:908px;height:2px;background:#217346;"></div>
<svg class="a" style="left:14px;top:260px;" width="17" height="17" viewBox="0 0 17 17"><path d="M16 1 L16 16 L1 16 Z" fill="#b4b4b4"/></svg>
<span class="t" style="left:49.66px;top:261px;font-size:16px;color:#000;">A</span>
<span class="t" style="left:126.66px;top:261px;font-size:16px;color:#217346;">B</span>
<span class="t" style="left:336.22px;top:261px;font-size:16px;color:#217346;">C</span>
<span class="t" style="left:733.22px;top:261px;font-size:16px;color:#217346;">D</span>
<span class="t" style="left:1039.66px;top:261px;font-size:16px;color:#000;">E</span>
<span class="t" style="left:1141.11px;top:261px;font-size:16px;color:#000;">F</span>
<span class="t" style="left:1260.38px;top:261px;font-size:16px;color:#000;">G</span>
<div class="a" style="left:2px;top:280px;width:32px;height:362px;background:#e6e6e6;"></div>
<div class="a" style="left:34px;top:280px;width:1px;height:362px;background:#ababab;"></div>
<div class="a" style="left:2px;top:521px;width:32px;height:48px;background:#d2d2d2;"></div>
<div class="a" style="left:33px;top:521px;width:2px;height:49px;background:#217346;"></div>
<div class="a" style="left:2px;top:303px;width:32px;height:1px;background:#ababab;"></div>
<div class="a" style="left:2px;top:327px;width:32px;height:1px;background:#ababab;"></div>
<div class="a" style="left:2px;top:351px;width:32px;height:1px;background:#ababab;"></div>
<div class="a" style="left:2px;top:375px;width:32px;height:1px;background:#ababab;"></div>
<div class="a" style="left:2px;top:399px;width:32px;height:1px;background:#ababab;"></div>
<div class="a" style="left:2px;top:423px;width:32px;height:1px;background:#ababab;"></div>
<div class="a" style="left:2px;top:447px;width:32px;height:1px;background:#ababab;"></div>
<div class="a" style="left:2px;top:471px;width:32px;height:1px;background:#ababab;"></div>
<div class="a" style="left:2px;top:496px;width:32px;height:1px;background:#ababab;"></div>
<div class="a" style="left:2px;top:520px;width:32px;height:1px;background:#ababab;"></div>
<div class="a" style="left:2px;top:545px;width:32px;height:1px;background:#ababab;"></div>
<div class="a" style="left:2px;top:569px;width:32px;height:1px;background:#ababab;"></div>
<div class="a" style="left:2px;top:593px;width:32px;height:1px;background:#ababab;"></div>
<div class="a" style="left:2px;top:617px;width:32px;height:1px;background:#ababab;"></div>
<span class="t" style="left:9.30px;top:285px;font-size:16px;color:#000;letter-spacing:-0.497px;">22</span>
<span class="t" style="left:9.30px;top:309px;font-size:16px;color:#000;letter-spacing:-0.497px;">23</span>
<span class="t" style="left:9.30px;top:333px;font-size:16px;color:#000;letter-spacing:-0.497px;">24</span>
<span class="t" style="left:9.30px;top:357px;font-size:16px;color:#000;letter-spacing:-0.497px;">25</span>
<span class="t" style="left:9.30px;top:381px;font-size:16px;color:#000;letter-spacing:-0.497px;">26</span>
<span class="t" style="left:9.30px;top:405px;font-size:16px;color:#000;letter-spacing:-0.497px;">27</span>
<span class="t" style="left:9.30px;top:425px;font-size:16px;color:#000;letter-spacing:-0.497px;">28</span>
<span class="t" style="left:9.30px;top:449px;font-size:16px;color:#000;letter-spacing:-0.497px;">29</span>
<span class="t" style="left:9.30px;top:476px;font-size:16px;color:#000;letter-spacing:-0.497px;">30</span>
<span class="t" style="left:9.30px;top:502px;font-size:16px;color:#000;letter-spacing:-0.497px;">31</span>
<span class="t" style="left:9.30px;top:527px;font-size:16px;color:#217346;letter-spacing:-0.497px;">32</span>
<span class="t" style="left:9.30px;top:551px;font-size:16px;color:#217346;letter-spacing:-0.497px;">33</span>
<span class="t" style="left:9.30px;top:575px;font-size:16px;color:#000;letter-spacing:-0.497px;">34</span>
<span class="t" style="left:9.30px;top:599px;font-size:16px;color:#000;letter-spacing:-0.497px;">35</span>
<span class="t" style="left:9.30px;top:623px;font-size:16px;color:#000;letter-spacing:-0.497px;">36</span>
<div class="a" style="left:190px;top:304px;width:303px;height:22px;background:#2b8ad4;"></div>
<div class="a" style="left:76px;top:328px;width:112px;height:22px;background:#2b8ad4;"></div>
<div class="a" style="left:190px;top:328px;width:303px;height:22px;background:#2b8ad4;"></div>
<div class="a" style="left:495px;top:328px;width:487px;height:22px;background:#2b8ad4;"></div>
<div class="a" style="left:984px;top:328px;width:122px;height:22px;background:#2b8ad4;"></div>
<div class="a" style="left:1108px;top:328px;width:74px;height:22px;background:#2b8ad4;"></div>
<div class="a" style="left:1184px;top:328px;width:165px;height:22px;background:#2b8ad4;"></div>
<div class="a" style="left:1351px;top:328px;width:158px;height:22px;background:#2b8ad4;"></div>
<div class="a" style="left:75px;top:327px;width:1px;height:24px;background:#5a5a5a;"></div>
<div class="a" style="left:75px;top:352px;width:1px;height:48px;background:#7f7f7f;"></div>
<div class="a" style="left:189px;top:352px;width:1px;height:48px;background:#7f7f7f;"></div>
<div class="a" style="left:494px;top:352px;width:1px;height:48px;background:#7f7f7f;"></div>
<div class="a" style="left:983px;top:352px;width:1px;height:48px;background:#7f7f7f;"></div>
<div class="a" style="left:1107px;top:352px;width:1px;height:48px;background:#7f7f7f;"></div>
<div class="a" style="left:1183px;top:352px;width:1px;height:48px;background:#7f7f7f;"></div>
<div class="a" style="left:1350px;top:352px;width:1px;height:48px;background:#7f7f7f;"></div>
<div class="a" style="left:75px;top:375px;width:1434px;height:1px;background:#7f7f7f;"></div>
<div class="a" style="left:75px;top:399px;width:1434px;height:1px;background:#7f7f7f;"></div>
<span class="t" style="left:193.60px;top:309px;font-size:15px;color:#fff;letter-spacing:0.857px;font-weight:700;">Mapping</span>
<span class="t" style="left:498.30px;top:309px;font-size:15px;color:#000;letter-spacing:0.469px;font-weight:700;">Codelocation(Dynamic)</span>
<span class="t" style="left:79.30px;top:333px;font-size:15px;color:#fff;letter-spacing:0.445px;font-weight:700;">Symbol</span>
<span class="t" style="left:193.30px;top:333px;font-size:15px;color:#fff;letter-spacing:1.148px;font-weight:700;">Name</span>
<span class="t" style="left:498.30px;top:333px;font-size:15px;color:#fff;letter-spacing:-0.196px;font-weight:700;">Expression</span>
<span class="t" style="left:987.20px;top:333px;font-size:15px;color:#fff;letter-spacing:0.881px;font-weight:700;">Unit</span>
<span class="t" style="left:1111.00px;top:333px;font-size:15px;color:#fff;letter-spacing:0.132px;font-weight:700;">Decimals</span>
<span class="t" style="left:1187.00px;top:333px;font-size:15px;color:#fff;letter-spacing:0.032px;font-weight:700;">Rule</span>
<span class="t" style="left:1354.30px;top:333px;font-size:15px;color:#fff;letter-spacing:0.719px;font-weight:700;">Principle/comment</span>
<span class="t" style="left:79.30px;top:357px;font-size:15.5px;color:#000;letter-spacing:0.761px;">outp..Q</span>
<span class="t" style="left:193.30px;top:357px;font-size:15.5px;color:#000;letter-spacing:1.075px;">Outflow</span>
<span class="t" style="left:498.30px;top:357px;font-size:15.5px;color:#000;letter-spacing:0.509px;">inp..Q</span>
<span class="t" style="left:987.00px;top:359px;font-size:15.5px;color:#000;">m</span>
<span class="t" style="left:1001.30px;top:355px;font-size:10.5px;color:#000;">3</span>
<span class="t" style="left:1007.50px;top:359px;font-size:15.5px;color:#000;letter-spacing:-0.027px;">.d</span>
<span class="t" style="left:1021.30px;top:355px;font-size:10.5px;color:#000;letter-spacing:-0.136px;">-1</span>
<div class="a" style="left:1351px;top:352px;width:158px;height:23px;overflow:hidden;"><span class="t" style="left:3.3px;top:5px;font-size:15.5px;letter-spacing:0.44px">same outflow as inflow</span></div>
<span class="t" style="left:79.30px;top:381px;font-size:15.5px;color:#000;letter-spacing:0.744px;">outp..</span>
<span class="t" style="left:122.80px;top:381px;font-size:15.5px;color:#1f8bd8;transform:scaleX(0.8270);transform-origin:0 0;">SV</span>
<span class="t" style="left:193.20px;top:381px;font-size:15.5px;color:#4f81bd;letter-spacing:0.139px;">MODEL.SV.Name</span>
<span class="t" style="left:498.50px;top:381px;font-size:15.5px;color:#4f81bd;transform:scaleX(0.8222);transform-origin:0 0;">SV</span>
<span class="t" style="left:986.80px;top:381px;font-size:15.5px;color:#4f81bd;letter-spacing:0.271px;">MODEL.SV.Unit</span>
<span class="t" style="left:1187.00px;top:381px;font-size:15.5px;color:#000;letter-spacing:-0.271px;">Phase(L)</span>
<div class="a" style="left:1351px;top:376px;width:158px;height:23px;overflow:hidden;"><span class="t" style="left:3.3px;top:5px;font-size:15.5px;letter-spacing:0.27px">Propagating reactor st</span></div>
<span class="t" style="left:38.5px;top:425px;font-size:15px;color:#7f7f7f;font-weight:700;letter-spacing:0.710px">Import </span>
<span class="t" style="left:94.3px;top:425px;font-size:15px;color:#7f7f7f;font-weight:700;letter-spacing:0.669px">parameter </span>
<span class="t" style="left:177.7px;top:425px;font-size:15px;color:#7f7f7f;font-weight:700;letter-spacing:0.317px">definitions </span>
<span class="t" style="left:261.5px;top:425px;font-size:15px;color:#7f7f7f;font-weight:700;letter-spacing:0.700px">from </span>
<span class="t" style="left:302.5px;top:425px;font-size:15px;color:#7f7f7f;font-weight:700;letter-spacing:0.430px">&quot;Parameters&quot; </span>
<span class="t" style="left:408.2px;top:425px;font-size:15px;color:#7f7f7f;font-weight:700;letter-spacing:0.591px">and </span>
<span class="t" style="left:441.4px;top:425px;font-size:15px;color:#7f7f7f;font-weight:700;letter-spacing:0.279px">calculated </span>
<span class="t" style="left:522.0px;top:425px;font-size:15px;color:#7f7f7f;font-weight:700;letter-spacing:0.249px">variables </span>
<span class="t" style="left:593.7px;top:425px;font-size:15px;color:#7f7f7f;font-weight:700;letter-spacing:0.760px">from </span>
<span class="t" style="left:635.0px;top:425px;font-size:15px;color:#7f7f7f;font-weight:700;letter-spacing:0.055px">&quot;Calculated </span>
<span class="t" style="left:722.8px;top:425px;font-size:15px;color:#7f7f7f;font-weight:700;letter-spacing:0.516px">variables&quot; </span>
<span class="t" style="left:804.8px;top:425px;font-size:15px;color:#7f7f7f;font-weight:700;letter-spacing:0.281px">worksheets </span>
<span class="t" style="left:894.6px;top:425px;font-size:15px;color:#7f7f7f;font-weight:700;letter-spacing:0.301px">in </span>
<span class="t" style="left:913.0px;top:425px;font-size:15px;color:#7f7f7f;font-weight:700;letter-spacing:0.250px">Model </span>
<span class="t" style="left:962.0px;top:425px;font-size:15px;color:#7f7f7f;font-weight:700;letter-spacing:0.311px">Base:</span>
<div class="a" style="left:190px;top:472px;width:303px;height:23px;background:#2b8ad4;"></div>
<div class="a" style="left:76px;top:497px;width:112px;height:23px;background:#2b8ad4;"></div>
<div class="a" style="left:190px;top:497px;width:303px;height:23px;background:#2b8ad4;"></div>
<div class="a" style="left:495px;top:497px;width:487px;height:23px;background:#2b8ad4;"></div>
<div class="a" style="left:984px;top:497px;width:122px;height:23px;background:#2b8ad4;"></div>
<div class="a" style="left:1108px;top:497px;width:74px;height:23px;background:#2b8ad4;"></div>
<div class="a" style="left:1184px;top:497px;width:165px;height:23px;background:#2b8ad4;"></div>
<div class="a" style="left:1351px;top:497px;width:158px;height:23px;background:#2b8ad4;"></div>
<div class="a" style="left:75px;top:496px;width:1px;height:24px;background:#5a5a5a;"></div>
<span class="t" style="left:193.30px;top:477px;font-size:15px;color:#fff;letter-spacing:0.655px;font-weight:700;">Model parameters</span>
<span class="t" style="left:498.30px;top:477px;font-size:15px;color:#000;letter-spacing:0.469px;font-weight:700;">Codelocation(Dynamic)</span>
<span class="t" style="left:79.30px;top:502px;font-size:15px;color:#fff;letter-spacing:0.445px;font-weight:700;">Symbol</span>
<span class="t" style="left:193.30px;top:502px;font-size:15px;color:#fff;letter-spacing:1.148px;font-weight:700;">Name</span>
<span class="t" style="left:498.30px;top:502px;font-size:15px;color:#fff;letter-spacing:-0.196px;font-weight:700;">Expression</span>
<span class="t" style="left:987.20px;top:502px;font-size:15px;color:#fff;letter-spacing:0.881px;font-weight:700;">Unit</span>
<span class="t" style="left:1111.00px;top:502px;font-size:15px;color:#fff;letter-spacing:0.132px;font-weight:700;">Decimals</span>
<span class="t" style="left:1187.00px;top:502px;font-size:15px;color:#fff;letter-spacing:0.032px;font-weight:700;">Rule</span>
<span class="t" style="left:1354.30px;top:502px;font-size:15px;color:#fff;letter-spacing:0.719px;font-weight:700;">Principle/comment</span>
<div class="a" style="left:77px;top:523px;width:905px;height:45px;background:#c6c6c6;"></div>
<div class="a" style="left:77px;top:523px;width:111px;height:22px;background:#fff;"></div>
<div class="a" style="left:189px;top:523px;width:1px;height:45px;background:#555;"></div>
<div class="a" style="left:494px;top:523px;width:1px;height:45px;background:#555;"></div>
<div class="a" style="left:77px;top:545px;width:905px;height:1px;background:#555;"></div>
<div class="a" style="left:983px;top:522px;width:1px;height:48px;background:#7f7f7f;"></div>
<div class="a" style="left:1107px;top:522px;width:1px;height:48px;background:#7f7f7f;"></div>
<div class="a" style="left:1183px;top:522px;width:1px;height:48px;background:#7f7f7f;"></div>
<div class="a" style="left:1350px;top:522px;width:1px;height:48px;background:#7f7f7f;"></div>
<div class="a" style="left:983px;top:545px;width:526px;height:1px;background:#7f7f7f;"></div>
<div class="a" style="left:983px;top:569px;width:526px;height:1px;background:#7f7f7f;"></div>
<div class="a" style="left:74px;top:520px;width:911px;height:51px;border:2px solid #217346;"></div>
<div class="a" style="left:980px;top:566px;width:7px;height:7px;background:#217346;border:1px solid #fff;"></div>
<span class="t" style="left:80.00px;top:527px;font-size:15.5px;color:#4f81bd;transform:scaleX(0.8952);transform-origin:0 0;">PAR</span>
<span class="t" style="left:194.00px;top:527px;font-size:15.5px;color:#3f6797;letter-spacing:0.015px;">MODEL.PAR.Name</span>
<span class="t" style="left:499.00px;top:527px;font-size:15.5px;color:#3f6797;letter-spacing:0.152px;">MODEL.PAR.Default</span>
<span class="t" style="left:80.00px;top:551px;font-size:15.5px;color:#3f6797;transform:scaleX(0.9138);transform-origin:0 0;">CVAR</span>
<span class="t" style="left:194.00px;top:551px;font-size:15.5px;color:#3f6797;">MODEL.CVAR.Name</span>
<span class="t" style="left:499.00px;top:551px;font-size:15.5px;color:#3f6797;letter-spacing:-0.066px;">MODEL.CVAR.Expression</span>
<div class="a" style="left:35px;top:473px;width:25px;height:25px;background:#fff;border:1px solid #c6c6c6;"></div>
<svg class="a" style="left:36px;top:474px;" width="23" height="23" viewBox="0 0 23 23"><path d="M2.8 11.2 L10.9 6.9 L15.2 13.7 L10.1 17.9 Z" fill="#e9bd7b"/><path d="M11.1 8 L13.9 11 L19.9 5.5 L17.1 2.5 Z" fill="#5a5a5a"/></svg>
<div class="a" style="left:987px;top:573px;width:28px;height:28px;background:#fff;border:1px solid #217346;"></div>
<svg class="a" style="left:990px;top:576px;" width="22" height="22" viewBox="0 0 22 22"><path d="M5 2.6 H20.6 V19.4 H1.6 V10" fill="none" stroke="#505050" stroke-width="1.4"/><path d="M8 4.6 H20" stroke="#8a8a8a" stroke-width="1.2"/><path d="M5.4 15.6 V12.4 H9.6 V9.4 H13 V12.4 H16.6 V15.6 Z" fill="#fff" stroke="#505050" stroke-width="1.3"/><path d="M4.6 0.8 H9.4 L6.6 5 H9.2 L2.4 12.4 L4.2 7 H1.6 Z" fill="#ee7a1b"/></svg>
<div class="a" style="left:1513px;top:258px;width:19px;height:19px;background:#fff;border:1px solid #ababab;"></div>
<svg class="a" style="left:1517px;top:264px;" width="11" height="7" viewBox="0 0 11 7"><path d="M0.5 6.5 L5.5 1 L10.5 6.5 Z" fill="#777"/></svg>
<div class="a" style="left:1513px;top:277px;width:19px;height:199px;background:#d9d9d9;"></div>
<div class="a" style="left:1513px;top:476px;width:19px;height:148px;background:#fff;border:1px solid #ababab;"></div>
<div class="a" style="left:1513px;top:624px;width:19px;height:18px;background:#fff;border:1px solid #ababab;border-top:none;"></div>
<svg class="a" style="left:1517px;top:630px;" width="11" height="7" viewBox="0 0 11 7"><path d="M0.5 0.5 L5.5 6 L10.5 0.5 Z" fill="#777"/></svg>
<div class="a" style="left:0px;top:643px;width:1536px;height:28px;background:#e6e6e6;"></div>
<svg class="a" style="left:27px;top:651px;" width="8" height="11" viewBox="0 0 8 11"><path d="M7 0.5 L1 5.5 L7 10.5 Z" fill="#c2c2c2"/></svg>
<svg class="a" style="left:56px;top:651px;" width="8" height="11" viewBox="0 0 8 11"><path d="M1 0.5 L7 5.5 L1 10.5 Z" fill="#c2c2c2"/></svg>
<div class="a" style="left:104px;top:646px;width:1px;height:21px;background:#8a8a8a;"></div>
<span class="t" style="left:117.00px;top:646px;font-size:16px;color:#444;letter-spacing:1.016px;">Unit</span>
<div class="a" style="left:162px;top:646px;width:1px;height:21px;background:#8a8a8a;"></div>
<span class="t" style="left:176.50px;top:646px;font-size:16px;color:#444;letter-spacing:0.312px;">Parameters</span>
<div class="a" style="left:276px;top:642px;width:65px;height:25px;background:#fff;border-left:1px solid #9b9b9b;border-right:1px solid #9b9b9b;"></div>
<div class="a" style="left:276px;top:666px;width:65px;height:2px;background:#217346;"></div>
<span class="t" style="left:288.00px;top:646px;font-size:16px;color:#217346;letter-spacing:0.267px;font-weight:700;">Code</span>
<svg class="a" style="left:373.5px;top:646.3px;" width="21" height="21" viewBox="0 0 21 21"><circle cx="10.5" cy="10.5" r="9.4" fill="none" stroke="#6a6a6a" stroke-width="1.2"/><path d="M5.5 10.5 H15.5 M10.5 5.5 V15.5" stroke="#6a6a6a" stroke-width="1.3"/></svg>
<div class="a" style="left:919px;top:650px;width:3px;height:3px;background:#b0b0b0;"></div>
<div class="a" style="left:919px;top:655px;width:3px;height:3px;background:#b0b0b0;"></div>
<div class="a" style="left:919px;top:660px;width:3px;height:3px;background:#b0b0b0;"></div>
<div class="a" style="left:937px;top:647px;width:19px;height:19px;background:#fff;border:1px solid #ababab;"></div>
<svg class="a" style="left:943.3px;top:651.5px;" width="7" height="10" viewBox="0 0 7 10"><path d="M6 0.2 L0.7 5 L6 9.8 Z" fill="#555"/></svg>
<div class="a" style="left:956px;top:647px;width:374px;height:19px;background:#fff;border:1px solid #ababab;"></div>
<div class="a" style="left:1330px;top:647px;width:161px;height:19px;background:#d9d9d9;"></div>
<div class="a" style="left:1491px;top:647px;width:19px;height:19px;background:#fff;border:1px solid #ababab;"></div>
<svg class="a" style="left:1498.5px;top:651.5px;" width="7" height="10" viewBox="0 0 7 10"><path d="M0.5 0.2 L5.8 5 L0.5 9.8 Z" fill="#777"/></svg>
<div class="a" style="left:0px;top:671px;width:1536px;height:1px;background:#d0d0d0;"></div>
<div class="a" style="left:0px;top:672px;width:1536px;height:26px;background:#f3f2f1;"></div>
<span class="t" style="left:1077.50px;top:680px;font-size:12.5px;color:#444;letter-spacing:0.178px;">Count: 6</span>
<div class="a" style="left:1149px;top:672px;width:50px;height:26px;background:#c8c8c8;"></div>
<svg class="a" style="left:1165px;top:676px;" width="18" height="16" viewBox="0 0 18 16"><path d="M0.7 0.7 H17.3 V15.3 H0.7 Z M0.7 5.5 H17.3 M0.7 10.4 H17.3 M6.2 0.7 V15.3 M11.8 0.7 V15.3" fill="none" stroke="#444" stroke-width="1.3"/></svg>
<svg class="a" style="left:1214px;top:676px;" width="19" height="16" viewBox="0 0 19 16"><rect x="0.7" y="0.7" width="17.6" height="14.6" fill="none" stroke="#444" stroke-width="1.3"/><rect x="5" y="4" width="9" height="8.5" fill="none" stroke="#444" stroke-width="1.2"/><path d="M7 6.6 H12 M7 8.4 H12 M7 10.2 H12" stroke="#444" stroke-width="0.9"/></svg>
<svg class="a" style="left:1264px;top:676px;" width="19" height="16" viewBox="0 0 19 16"><path d="M0.7 0.7 H17.3 V15.3 H0.7 Z M0.7 7.5 H11.5 M6.2 0.7 V7.5 M11.5 0.7 V7.5" fill="none" stroke="#444" stroke-width="1.3"/></svg>
<div class="a" style="left:1306px;top:684px;width:10px;height:1px;background:#333;"></div>
<div class="a" style="left:1322px;top:685px;width:125px;height:1px;background:#8a8a8a;"></div>
<div class="a" style="left:1382px;top:678px;width:6px;height:14px;background:#767676;"></div>
<div class="a" style="left:1453px;top:684px;width:10px;height:1px;background:#333;"></div>
<div class="a" style="left:1457.5px;top:679.5px;width:1px;height:10px;background:#333;"></div>
<span class="t" style="left:1479.50px;top:680px;font-size:12.5px;color:#444;letter-spacing:-0.357px;">100%</span>
<div class="a" style="left:0px;top:44px;width:1px;height:655px;background:#217346;"></div>
<div class="a" style="left:1px;top:44px;width:1px;height:654px;background:rgba(33,115,70,0.15);"></div>
<div class="a" style="left:1535px;top:44px;width:1px;height:655px;background:#217346;"></div>
<div class="a" style="left:1534px;top:44px;width:1px;height:654px;background:rgba(33,115,70,0.45);"></div>
<div class="a" style="left:0px;top:698px;width:1536px;height:1px;background:#217346;"></div>
<div class="a" style="left:1px;top:697px;width:1534px;height:1px;background:rgba(33,115,70,0.25);"></div>
</body></html>
